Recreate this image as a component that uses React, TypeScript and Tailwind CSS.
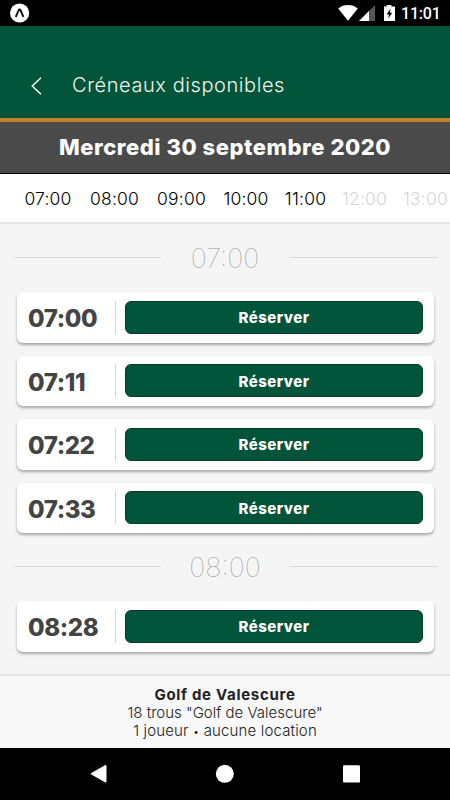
import clsx from 'clsx';

const hours = [
  { label: '07:00', width: 'w-[48px]', enabled: true },
  { label: '08:00', width: 'w-[49px]', enabled: true },
  { label: '09:00', width: 'w-[49px]', enabled: true },
  { label: '10:00', width: 'w-[44px]', enabled: true },
  { label: '11:00', width: 'w-[39px]', enabled: true },
  { label: '12:00', width: 'w-[43px]', enabled: false },
  { label: '13:00', width: 'w-[43px]', enabled: false },
];

const sections = [
  { hour: '07:00', slots: ['07:00', '07:11', '07:22', '07:33'] },
  { hour: '08:00', slots: ['08:28'] },
];

function StatusBar() {
  return (
    <div className="h-[26px] shrink-0 bg-black flex items-center text-white">
      <svg className="ml-[10px]" width="20" height="20" viewBox="0 0 20 20">
        <circle cx="9.6" cy="10" r="9.6" fill="#fff" />
        <path
          d="M5.8 13.8 L8.7 7.2 Q9.6 5.6 10.5 7.2 L13.4 13.8"
          fill="none"
          stroke="#000"
          strokeWidth="1.9"
        />
      </svg>
      <svg className="ml-auto" width="58" height="26" viewBox="0 0 58 26">
        <path d="M0.2 8.4 C5.5 3.9 14.5 3.9 19.8 8.4 L10 20.8 Z" fill="#fff" />
        <path d="M37 5 V21 H21 Z" fill="#555" />
        <path d="M31 11 V21 H21 Z" fill="#fff" />
        <path d="M46 6.4 h2.6 V5 h4.8 v1.4 H57 V21 H46 Z" fill="#fff" />
        <path d="M52.6 8.8 L48.6 14.5 H51 L50.3 18.6 L54.2 12.8 H51.9 Z" fill="#000" />
      </svg>
      <span className="w-[38px] ml-[5px] mr-[11px] pt-0.5 font-[Roboto] text-base font-medium leading-none tracking-[-0.2px] whitespace-nowrap">
        11:01
      </span>
    </div>
  );
}

function Header() {
  return (
    <header className="h-24 shrink-0 bg-[#00543a] border-b-4 border-[#c47d29] flex items-center pt-[27px] pl-[31px]">
      <svg width="11" height="18" viewBox="0 0 11 18" fill="none" stroke="#fff" strokeWidth="1.4">
        <path d="M10 0.8 L1.2 9 L10 17.2" />
      </svg>
      <h1 className="ml-[30px] pb-0.5 text-xl font-light text-[#f2f2ea] tracking-[0.57px]">
        Créneaux disponibles
      </h1>
    </header>
  );
}

function HourTabs() {
  return (
    <nav className="h-[50px] shrink-0 bg-white border-b-2 border-[#e6e6e6] flex items-center gap-[18px] pl-6 pt-[3px] overflow-hidden">
      {hours.map((hour) => (
        <button
          key={hour.label}
          className={clsx(
            'shrink-0 flex justify-center whitespace-nowrap text-[17.5px] font-light tracking-[0.2px]',
            hour.width,
            hour.enabled ? 'text-black' : 'text-[#d6d6d6]'
          )}
        >
          {hour.label}
        </button>
      ))}
    </nav>
  );
}

function SlotCard({ time }: { time: string }) {
  return (
    <div className="h-[50.5px] bg-white rounded-md shadow-[0_2px_3px_rgba(0,0,0,0.32)] flex items-center pl-[11px] pr-[11px]">
      <div className="w-[88px] h-[33px] pt-1 border-r border-[#d4d4d4] flex items-center text-2xl font-extrabold tracking-[-0.4px] text-[#444]">
        {time}
      </div>
      <button className="ml-[9px] flex-1 h-[33px] pt-0.5 rounded-[6px] bg-[#00543a] border border-[#0b3a28] text-white text-[15px] font-extrabold tracking-[0.5px]">
        Réserver
      </button>
    </div>
  );
}

function HourDivider({ hour }: { hour: string }) {
  return (
    <div className="h-[68px] px-[13px] pb-0.5 flex items-center">
      <div className="flex-1 h-px bg-[#dadada]" />
      <span className="w-32 pt-[5px] flex justify-center text-[27px] font-thin text-[#999]">
        {hour}
      </span>
      <div className="flex-1 h-px bg-[#dadada]" />
    </div>
  );
}

function Footer() {
  return (
    <footer className="h-[74px] shrink-0 bg-[#f8f8f8] border-t-2 border-[#e4e4e4] pt-[10px] text-center text-[15px] leading-[18px] font-light text-[#222]">
      <p className="font-bold tracking-[0.7px]">Golf de Valescure</p>
      <p>18 trous "Golf de Valescure"</p>
      <p className="tracking-[0.15px]">
        1 joueur <span className="text-[11px] leading-none">•</span> aucune location
      </p>
    </footer>
  );
}

function NavBar() {
  return (
    <div className="h-[52px] shrink-0 bg-black flex items-center">
      <svg width="450" height="52" viewBox="0 0 450 52" fill="#fff">
        <path d="M91.3 25 L105 17.2 Q106.5 16.8 106.5 18 V33.4 Q106.5 34.8 105 34.2 L91.3 26.4 Q90.5 25.7 91.3 25 Z" />
        <circle cx="224.8" cy="25.8" r="9" />
        <rect x="343" y="17.3" width="17" height="17.2" rx="1.2" />
      </svg>
    </div>
  );
}

export default function App() {
  return (
    <div className="w-[450px] h-[800px] overflow-hidden flex flex-col bg-[#f5f5f5] font-[Inter,sans-serif]">
      <StatusBar />
      <Header />
      <h2 className="h-[52px] shrink-0 bg-[#4a4a4a] border-b border-black flex items-center justify-center text-[22px] font-extrabold tracking-[0.55px] text-white">
        Mercredi 30 septembre 2020
      </h2>
      <HourTabs />
      <main className="flex-1 min-h-0 overflow-hidden">
        {sections.map((section) => (
          <section key={section.hour}>
            <HourDivider hour={section.hour} />
            <div className="pl-[17px] pr-4 flex flex-col gap-[13px]">
              {section.slots.map((time) => (
                <SlotCard key={time} time={time} />
              ))}
            </div>
          </section>
        ))}
      </main>
      <Footer />
      <NavBar />
    </div>
  );
}
